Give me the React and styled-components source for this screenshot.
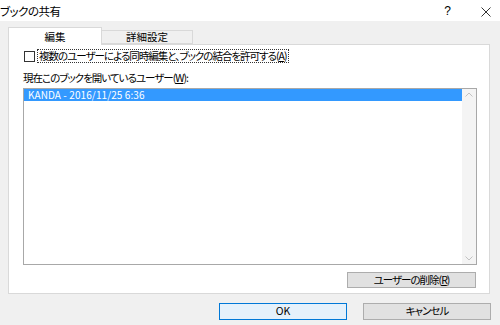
import styled, { createGlobalStyle } from 'styled-components';

const GlobalStyle = createGlobalStyle`
    html, body {
        margin: 0;
        padding: 0;
        background: #f0f0f0;
    }
    body {
        font-family: "Noto Sans CJK JP", "Noto Sans", sans-serif;
        font-feature-settings: "palt";
        font-size: 10.5px;
        letter-spacing: -1px;
        color: #000;
    }
`;

const Window = styled.div`
    width: 500px;
    height: 325px;
    display: flex;
    flex-direction: column;
    background: #f0f0f0;
    overflow: hidden;
`;

const TitleBar = styled.div`
    height: 21px;
    background: #ffffff;
    display: flex;
    align-items: center;
    justify-content: space-between;
`;

const Title = styled.span`
    font-size: 11.5px;
    letter-spacing: -0.5px;
    line-height: 21px;
    padding-top: 2px;
`;

const TitleButtons = styled.div`
    display: flex;
    align-items: center;
    gap: 30px;
    padding-right: 9px;
`;

const HelpButton = styled.span`
    font-family: "Liberation Sans", sans-serif;
    font-size: 12px;
    letter-spacing: 0;
    line-height: 21px;
    padding-top: 2px;
`;

const CloseButton = styled.svg`
    width: 10px;
    height: 10px;
    margin-top: 3px;
`;

const TabStrip = styled.div`
    display: flex;
    align-items: flex-end;
    height: 23px;
    padding-left: 8px;
    position: relative;
    z-index: 1;
`;

const Tab = styled.div`
    box-sizing: border-box;
    width: ${p => p.$w}px;
    height: ${p => (p.$active ? 18 : 14)}px;
    margin-bottom: ${p => (p.$active ? -1 : 0)}px;
    background: ${p => (p.$active ? '#ffffff' : '#f0f0f0')};
    border: 1px solid #d9d9d9;
    border-bottom: ${p => (p.$active ? 'none' : '1px solid #d9d9d9')};
    border-left: ${p => (p.$first ? '1px solid #d9d9d9' : 'none')};
    display: flex;
    align-items: center;
    justify-content: center;
    font-size: 10.5px;
    letter-spacing: 0;
    line-height: 1;
    padding-top: ${p => (p.$active ? 1 : 0)}px;
`;

const Panel = styled.div`
    box-sizing: border-box;
    margin-left: 8px;
    width: 482px;
    height: 250px;
    background: #ffffff;
    border: 1px solid #d9d9d9;
    display: flex;
    flex-direction: column;
    padding: 4px 12px 0 14px;
`;

const CheckRow = styled.label`
    display: flex;
    align-items: center;
    gap: 2px;
    margin-left: 1px;
    height: 14px;
`;

const CheckBox = styled.span`
    box-sizing: border-box;
    width: 11px;
    height: 11px;
    border: 1px solid #333333;
    background: #ffffff;
`;

const FocusLabel = styled.span`
    border: 1px dotted #333333;
    padding: 0 1px;
    line-height: 12px;
    height: 12px;
    display: flex;
    align-items: center;
`;

const Key = styled.u`
    text-decoration: underline;
`;

const ListLabel = styled.div`
    margin-top: 9px;
    line-height: 12px;
    height: 12px;
`;

const ListBox = styled.div`
    box-sizing: border-box;
    margin-top: 4px;
    width: 454px;
    height: 177px;
    border: 1px solid #a8a8a8;
    display: flex;
    background: #ffffff;
`;

const Rows = styled.div`
    flex: 1;
    padding: 0;
`;

const Row = styled.div`
    height: 12px;
    line-height: 12px;
    padding-left: 4px;
    background: ${p => (p.$selected ? '#3399ff' : 'transparent')};
    color: ${p => (p.$selected ? '#ffffff' : '#000000')};
    font-size: 10px;
    letter-spacing: 0.1px;
`;

const ScrollTrack = styled.div`
    width: 14px;
    background: #f4f4f4;
    display: flex;
    flex-direction: column;
    justify-content: space-between;
    align-items: center;
    padding: 3px 0;
`;

const Arrow = styled.svg`
    width: 8px;
    height: 5px;
`;

const RemoveRow = styled.div`
    display: flex;
    justify-content: flex-end;
    margin-top: 7px;
    padding-right: 1px;
`;

const Button = styled.button`
    box-sizing: border-box;
    width: ${p => p.$w || 128}px;
    height: ${p => p.$h || 17}px;
    padding: 0;
    margin: 0;
    font-family: inherit;
    font-feature-settings: "palt";
    font-size: 10.5px;
    letter-spacing: ${p => (p.$latin ? 0 : -1)}px;
    line-height: 1;
    color: #000;
    background: ${p => (p.$default ? '#e5f1fb' : '#e1e1e1')};
    border: 1px solid ${p => (p.$default ? '#0078d7' : '#adadad')};
    display: flex;
    align-items: center;
    justify-content: center;
`;

const Footer = styled.div`
    display: flex;
    justify-content: flex-end;
    gap: 16px;
    padding-right: 9px;
    margin-top: 9px;
`;

function App() {
    return (
        <>
            <GlobalStyle />
            <Window>
                <TitleBar>
                    <Title>ブックの共有</Title>
                    <TitleButtons>
                        <HelpButton>?</HelpButton>
                        <CloseButton viewBox="0 0 10 10">
                            <path d="M0.5 0.5 L9.5 9.5 M9.5 0.5 L0.5 9.5" stroke="#333" strokeWidth="1" fill="none" />
                        </CloseButton>
                    </TitleButtons>
                </TitleBar>

                <TabStrip>
                    <Tab $active $first $w={94}>編集</Tab>
                    <Tab $w={91}>詳細設定</Tab>
                </TabStrip>

                <Panel>
                    <CheckRow>
                        <CheckBox />
                        <FocusLabel>
                            複数のユーザーによる同時編集と、ブックの結合を許可する(<Key>A</Key>)
                        </FocusLabel>
                    </CheckRow>

                    <ListLabel>現在このブックを開いているユーザー(<Key>W</Key>):</ListLabel>
                    <ListBox>
                        <Rows>
                            <Row $selected>KANDA - 2016/11/25 6:36</Row>
                        </Rows>
                        <ScrollTrack>
                            <Arrow viewBox="0 0 8 5">
                                <path d="M0.5 4.5 L4 1 L7.5 4.5" stroke="#c2c2c2" fill="none" />
                            </Arrow>
                            <Arrow viewBox="0 0 8 5">
                                <path d="M0.5 0.5 L4 4 L7.5 0.5" stroke="#c2c2c2" fill="none" />
                            </Arrow>
                        </ScrollTrack>
                    </ListBox>

                    <RemoveRow>
                        <Button $w={129} $h={16}>ユーザーの削除(<Key>R</Key>)</Button>
                    </RemoveRow>
                </Panel>

                <Footer>
                    <Button $default $latin>OK</Button>
                    <Button>キャンセル</Button>
                </Footer>
            </Window>
        </>
    );
}

export default App;
